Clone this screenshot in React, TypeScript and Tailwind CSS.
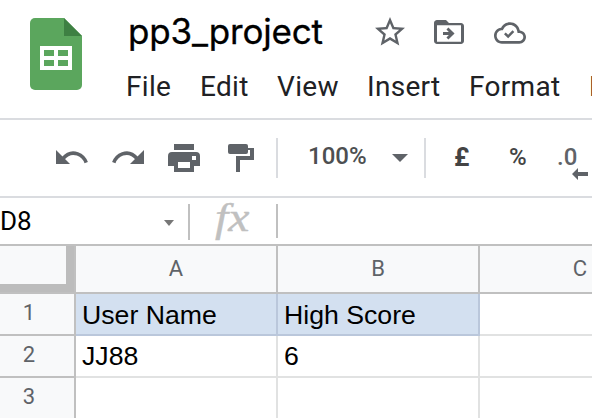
import React from "react";

const menus = [
  { label: "File", cls: "w-[74px]" },
  { label: "Edit", cls: "w-[77px]" },
  { label: "View", cls: "w-[90px]" },
  { label: "Insert", cls: "w-[102px]" },
  { label: "Format", cls: "w-[120px]" },
  { label: "Data", cls: "w-[80px]" },
];

const rows = [
  { n: "1", a: "User Name", b: "High Score", head: true },
  { n: "2", a: "JJ88", b: "6", head: false },
  { n: "3", a: "", b: "", head: false },
];

function SheetsLogo() {
  return (
    <svg className="ml-[30px] mt-[18px] h-[72px] w-[52px] shrink-0" viewBox="0 0 52 72">
      <path fill="#5ba65d" d="M5 0H34L52 18V67a5 5 0 0 1-5 5H5a5 5 0 0 1-5-5V5a5 5 0 0 1 5-5z" />
      <path fill="#3e8043" d="M34 0L52 18H34z" />
      <path fill="#fff" fillRule="evenodd" d="M10 28H42V52H10zM14 32V38H24V32zM28 32V38H38V32zM14 42V48H24V42zM28 42V48H38V42z" />
    </svg>
  );
}

function Star() {
  return (
    <svg className="h-9 w-9" viewBox="0 0 24 24" fill="#5f6368">
      <path d="M22 9.24l-7.19-.62L12 2 9.19 8.63 2 9.24l5.46 4.73L5.82 21 12 17.27 18.18 21l-1.63-7.03L22 9.24zM12 15.4l-3.76 2.27 1-4.28-3.32-2.88 4.38-.38L12 6.1l1.71 4.04 4.38.38-3.32 2.88 1 4.28L12 15.4z" />
    </svg>
  );
}

function FolderMove() {
  return (
    <svg className="ml-[23px] h-9 w-9" viewBox="0 0 24 24" fill="#5f6368">
      <path d="M20 6h-8l-2-2H4c-1.1 0-2 .9-2 2v12c0 1.1.9 2 2 2h16c1.1 0 2-.9 2-2V8c0-1.1-.9-2-2-2zm0 12.500H4V7.500h16v11z" />
      <path d="M11.600 17l4.100-4-4.100-4-1.300 1.300 1.600 1.700H8v2h3.900l-1.600 1.700z" />
    </svg>
  );
}

function CloudDone() {
  return (
    <svg className="ml-[27px] mt-[1px] h-8 w-8" viewBox="0 0 24 24" fill="#5f6368">
      <path d="M19.350 10.040C18.670 6.590 15.640 4 12 4 9.110 4 6.610 5.640 5.360 8.040 2.350 8.360 0 10.900 0 14c0 3.310 2.690 6 6 6h13c2.760 0 5-2.240 5-5 0-2.640-2.050-4.780-4.650-4.960zM19 18H6c-2.210 0-4-1.790-4-4 0-2.050 1.530-3.760 3.560-3.970l1.070-.110.5-.950C8.080 7.140 9.940 6 12 6c2.620 0 4.880 1.860 5.390 4.430l.3 1.500 1.530.110c1.560.1 2.780 1.410 2.780 2.960 0 1.650-1.350 3-3 3z" />
      <path d="M7.500 12.900L10.600 16l4.600-4.800-1.300-1.300-3.300 3.500-1.800-1.800z" />
    </svg>
  );
}

function Undo({ className }: { className: string }) {
  return (
    <svg className={className} viewBox="0 0 32 14">
      <path fill="#5f6368" d="M0 0L14 14H0z" />
      <path fill="none" stroke="#5f6368" strokeWidth="3.6" d="M7 8.500C11.500 3.200 17 2.300 21.500 3.900C26 5.500 28.800 8.700 30.200 12.700" />
    </svg>
  );
}

function Divider({ className }: { className: string }) {
  return <div className={"h-10 w-[2px] shrink-0 bg-[#dadce0] " + className} />;
}

export default function App() {
  return (
    <div className="flex h-[418px] w-[592px] flex-col overflow-hidden bg-white font-['Roboto',sans-serif]">
      <header className="flex h-[118px] shrink-0">
        <SheetsLogo />
        <div className="ml-[44px] flex w-[466px] shrink-0 flex-col">
          <div className="flex h-[64px] items-center">
            <h1 className="mb-[2px] w-[246px] shrink-0 whitespace-nowrap pl-[2px] font-['Inter',sans-serif] text-[35px] leading-[62px] tracking-[-0.2px] text-black [-webkit-text-stroke:0.3px_black]">
              pp3_project
            </h1>
            <Star />
            <FolderMove />
            <CloudDone />
          </div>
          <nav className="flex h-[46px] text-[28px] leading-[46px] tracking-[0.3px] text-[#202124]">
            {menus.map((m) => (
              <span key={m.label} className={"shrink-0 whitespace-nowrap " + m.cls}>
                {m.label}
              </span>
            ))}
          </nav>
        </div>
      </header>

      <div className="flex h-[80px] shrink-0 items-center border-y-2 border-[#dadce0]">
        <Undo className="ml-[56px] mt-[-2px] h-[14px] w-8 shrink-0" />
        <Undo className="ml-[24px] mt-[-2px] h-[14px] w-8 shrink-0 -scale-x-100" />
        <svg className="ml-[24px] h-7 w-8 shrink-0" viewBox="0 0 32 28" fill="#5f6368">
          <path d="M6 0H26V6H6z" />
          <path fillRule="evenodd" d="M4 8H28a4 4 0 0 1 4 4V22H26V28H6V22H0V12a4 4 0 0 1 4-4zM10 18V24H22V18zM24 12V16H28V12z" />
        </svg>
        <svg className="ml-[28px] h-7 w-[26px] shrink-0" viewBox="0 0 26 28" fill="#5f6368">
          <rect width="20" height="10" rx="2" />
          <path d="M20 4H26V16H12V28H8V12H22V6H20z" />
        </svg>
        <Divider className="ml-[22px]" />
        <span className="mb-[4px] ml-[30px] w-[84px] shrink-0 text-[24px] font-medium leading-[30px] text-[#4d4f51]">100%</span>
        <svg className="h-2 w-4 shrink-0" viewBox="0 0 16 8">
          <path fill="#5f6368" d="M0 0H16L8 8z" />
        </svg>
        <Divider className="ml-[16px]" />
        <span className="mb-[2px] ml-[28px] w-[55px] shrink-0 text-[26px] font-bold leading-[30px] text-[#444]">£</span>
        <span className="mb-[2px] w-[48px] shrink-0 text-[24px] font-medium leading-[30px] text-[#444]">%</span>
        <div className="mt-[7px] flex w-[36px] shrink-0 flex-col">
          <span className="h-[21px] text-[24px] font-medium leading-[28px] text-[#5f6368]">.0</span>
          <svg className="ml-[15px] mt-[4px] h-3 w-4" viewBox="0 0 16 12">
            <path fill="#5f6368" d="M0 6L6 0V4H16V8H6V12z" />
          </svg>
        </div>
      </div>

      <div className="flex h-[46px] shrink-0">
        <span className="w-[164px] shrink-0 text-[26px] leading-[46px] text-black">D8</span>
        <svg className="mt-[22px] h-[6px] w-[10px] shrink-0" viewBox="0 0 10 6">
          <path fill="#777" d="M0 0H10L5 6z" />
        </svg>
        <div className="ml-[14px] mt-[6px] h-9 w-[2px] shrink-0 bg-[#c0c0c0]" />
        <span className="ml-[25px] w-[61px] shrink-0 origin-left scale-x-[1.22] font-['Liberation_Serif',serif] text-[39px] italic leading-[40px] text-[#c0c0c0] [-webkit-text-stroke:0.4px_#c0c0c0]">fx</span>
        <div className="mt-[6px] h-[34px] w-[2px] shrink-0 bg-[#c0c0c0]" />
      </div>

      <div className="flex h-[50px] shrink-0 border-y-2 border-[#c0c0c0] bg-[#f8f9fa] text-center text-[22px] leading-[46px] text-[#5f6368]">
        <div className="flex w-[76px] shrink-0 border-r-2 border-[#c0c0c0]">
          <div className="h-[46px] w-[74px] border-b-8 border-r-8 border-[#bcbcbc]" />
        </div>
        <div className="w-[202px] shrink-0 border-r-2 border-[#c0c0c0]">A</div>
        <div className="w-[202px] shrink-0 border-r-2 border-[#c0c0c0]">B</div>
        <div className="w-[200px] shrink-0">C</div>
      </div>

      {rows.map((r) => (
        <div key={r.n} className="flex h-[42px] shrink-0">
          <div className="w-[76px] shrink-0 border-b-2 border-r-2 border-[#c0c0c0] bg-[#f8f9fa] pr-[16px] text-center text-[22px] leading-[38px] text-[#5f6368]">
            {r.n}
          </div>
          {[r.a, r.b, ""].map((text, i) => (
            <div
              key={i}
              className={
                "w-[202px] shrink-0 whitespace-nowrap border-b-2 border-r-2 pl-[6px] font-['Liberation_Sans',Arial,sans-serif] text-[26.67px] text-black " +
                (r.head ? "leading-[42px] " : "leading-[41px] ") +
                (r.head && i < 2 ? "border-[#bac7db] bg-[#d3e0f0]" : "border-[#e1e2e2] bg-white")
              }
            >
              {text}
            </div>
          ))}
        </div>
      ))}
    </div>
  );
}
